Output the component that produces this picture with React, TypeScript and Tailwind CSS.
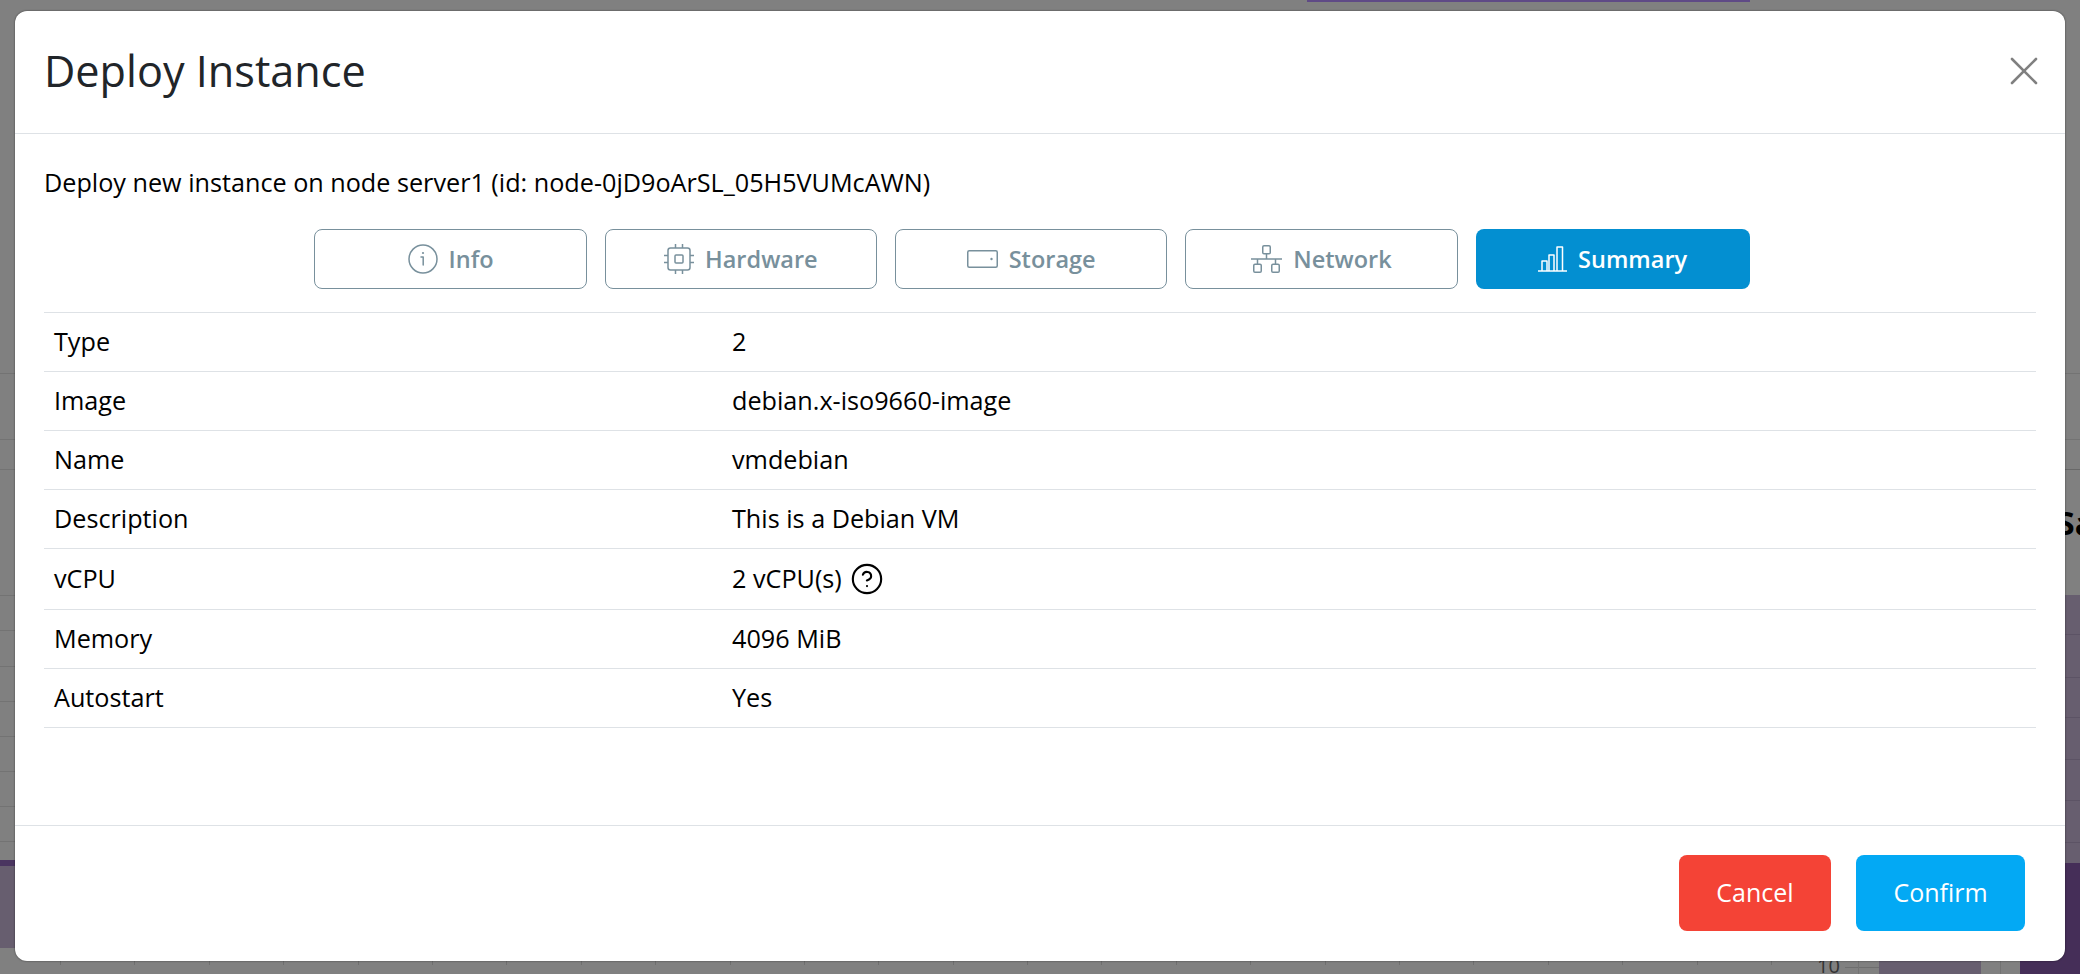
import { CircleHelp, X } from 'lucide-react';

const rows = [
  { label: 'Type', value: '2' },
  { label: 'Image', value: 'debian.x-iso9660-image' },
  { label: 'Name', value: 'vmdebian' },
  { label: 'Description', value: 'This is a Debian VM' },
  { label: 'vCPU', value: '2 vCPU(s)', help: true },
  { label: 'Memory', value: '4096 MiB' },
  { label: 'Autostart', value: 'Yes' },
];

function InfoIcon() {
  return (
    <svg width="30" height="30" viewBox="0 0 30 30" fill="none" stroke="currentColor" strokeWidth="1.5">
      <circle cx="15" cy="15" r="14" />
      <path d="M13 13h2.2v8" strokeLinecap="round" strokeLinejoin="round" />
      <circle cx="15" cy="9" r="1.1" fill="currentColor" stroke="none" />
    </svg>
  );
}

function ChipIcon() {
  return (
    <svg width="30" height="30" viewBox="0 0 30 30" fill="none" stroke="currentColor" strokeWidth="1.5">
      <rect x="4" y="4" width="22" height="22" rx="2.5" />
      <rect x="11" y="11" width="8" height="8" rx="1" />
      <path d="M11.5 0v4M18.5 0v4M11.5 26v4M18.5 26v4M0 11.5h4M0 18.5h4M26 11.5h4M26 18.5h4" />
    </svg>
  );
}

function StorageIcon() {
  return (
    <svg width="31" height="18" viewBox="0 0 31 18" fill="none" stroke="currentColor" strokeWidth="1.5">
      <rect x="0.75" y="0.75" width="29.5" height="16.5" rx="1.5" />
      <circle cx="24.5" cy="9" r="1.2" fill="currentColor" stroke="none" />
    </svg>
  );
}

function NetworkIcon() {
  return (
    <svg width="31" height="28" viewBox="0 0 31 28" fill="none" stroke="currentColor" strokeWidth="1.5">
      <rect x="11.75" y="0.75" width="7.5" height="8" rx="1.25" />
      <rect x="2.75" y="19.25" width="7.5" height="8" rx="1.25" />
      <rect x="20.75" y="19.25" width="7.5" height="8" rx="1.25" />
      <path d="M15.5 8.75v5.25M0 14h31M6.5 14v5.25M24.5 14v5.25" />
    </svg>
  );
}

function SummaryIcon() {
  return (
    <svg width="29" height="26" viewBox="0 0 29 26" fill="none" stroke="currentColor" strokeWidth="1.5">
      <path d="M0 25h29" />
      <path d="M4 25V15h5v10M11 25V9h5v16M19 25V1h5.5v24" strokeLinejoin="round" />
    </svg>
  );
}

const tabs = [
  { label: 'Info', icon: InfoIcon },
  { label: 'Hardware', icon: ChipIcon },
  { label: 'Storage', icon: StorageIcon },
  { label: 'Network', icon: NetworkIcon },
  { label: 'Summary', icon: SummaryIcon, active: true },
];

const leftBands = [
  'h-[374px]', 'h-[66px]', 'h-[30px] border-[#686868]', 'h-[126px]', 'h-[35px]', 'h-[36px]', 'h-[35px]',
  'h-[35px]', 'h-[35px]', 'h-[35px]', 'h-[35px]',
];
const purpleBands = ['h-[40px]', 'h-[43px]', 'h-[40px]', 'h-[42px]', 'h-[41px]', 'h-[42px]', 'h-[20px] border-transparent'];

// what is left visible of the dimmed page behind the modal
function Backdrop() {
  return (
    <div className="absolute inset-0 flex overflow-hidden">
      <div className="flex w-[15px] flex-col">
        {leftBands.map((band, i) => (
          <div key={i} className={`border-b border-[#737373] ${band}`} />
        ))}
        <div className="h-[18px]" />
        <div className="h-[6px] bg-[#4a3560]" />
        <div className="h-[82px] bg-[#675e6f]" />
      </div>

      <div className="flex flex-1 flex-col justify-between">
        <div className="ml-[1292px] h-[2px] w-[443px] bg-[#5f4a86]" />
        <div className="flex h-[13px] overflow-hidden pl-[45px]">
          {Array.from({ length: 23 }, (_, i) => (
            <div key={i} className="h-[4px] w-[74.4px] shrink-0 border-l border-[#6f6f6f]" />
          ))}
          <div className="h-[4px] w-[46px] shrink-0 border-l border-[#6f6f6f]" />
          <div className="-mt-[3px] w-[28px] shrink-0 text-[20px] leading-[16px] text-[#333]">10</div>
          <div className="mt-[6px] h-px w-[13px] bg-[#6e6e6e]" />
          <div className="h-full w-px bg-[#737373]" />
          <div className="mt-[6px] h-px w-[20px] bg-[#6e6e6e]" />
          <div className="h-full w-[102px] bg-[#675e6f]" />
          <div className="ml-[19px] h-full w-px bg-[#737373]" />
        </div>
      </div>

      <div className="flex w-[60px] flex-col">
        <div className="h-[374px] border-b border-[#737373]" />
        <div className="h-[66px] border-b border-[#737373]" />
        <div className="h-[30px] border-b border-[#686868]" />
        <div className="h-[125px] overflow-hidden whitespace-nowrap pl-[37px] pt-[33px] text-[32px] font-bold leading-[40px] text-black">
          Sa
        </div>
        <div className="flex h-[268px] flex-col bg-[#675e6f]">
          {purpleBands.map((band, i) => (
            <div key={i} className={`border-b border-[#5c5365] ${band}`} />
          ))}
        </div>
        <div className="flex-1 bg-[#452e58]" />
      </div>
    </div>
  );
}

export default function App() {
  return (
    <div className="relative h-[974px] overflow-hidden bg-[#808080] font-['Open_Sans',sans-serif] text-[#212529]">
      <Backdrop />
      <div className="absolute left-[15px] top-[11px] flex h-[950px] w-[2050px] flex-col rounded-[12px] bg-white shadow-[0_0_2px_rgba(0,0,0,0.6)]">
        <div className="flex h-[123px] items-center justify-between border-b border-[#dee2e6] pb-[2px] pl-[29px] pr-[17px]">
          <h1 className="text-[43.2px] leading-none">Deploy Instance</h1>
          <X className="h-[48px] w-[48px] text-[#808080]" strokeWidth={1.3} />
        </div>

        <div className="flex-1 px-[29px]">
          <p className="mt-[30px] text-[25.2px] leading-[36px] text-black">
            Deploy new instance on node server1 (id: node-0jD9oArSL_05H5VUMcAWN)
          </p>
          <div className="mt-[29px] flex justify-center gap-[18px] pr-[16px]">
            {tabs.map(({ label, icon: Icon, active }) => (
              <button
                key={label}
                className={
                  active
                    ? 'flex h-[60px] w-[274px] items-center justify-center gap-[11px] rounded-[8px] bg-[#038fd1] text-[23.5px] font-semibold text-white'
                    : 'flex h-[60px] w-[272.3px] items-center justify-center gap-[11px] rounded-[8px] border border-[#78909c] text-[23.5px] font-semibold text-[#78909c]'
                }
              >
                <Icon />
                <span className="mt-[2px]">{label}</span>
              </button>
            ))}
          </div>
          <div className="mt-[23px] border-t border-[#dee2e6]">
            {rows.map((row) => (
              <div
                key={row.label}
                className={
                  row.help
                    ? 'flex items-center border-b border-[#dee2e6] px-[10px] pb-[13px] pt-[11px] text-[25.2px] leading-[36px] text-black'
                    : 'flex items-center border-b border-[#dee2e6] px-[10px] pb-[12px] pt-[10px] text-[25.2px] leading-[36px] text-black'
                }
              >
                <div className="w-[678px]">{row.label}</div>
                <div className="flex items-center gap-[8px]">
                  {row.value}
                  {row.help && <CircleHelp className="mt-[2px] h-[34px] w-[34px]" strokeWidth={1.5} />}
                </div>
              </div>
            ))}
          </div>
        </div>

        <div className="flex h-[136px] items-start justify-end gap-[25px] border-t border-[#dee2e6] pr-[40px] pt-[29px]">
          <button className="h-[76px] w-[152px] rounded-[8px] bg-[#f44336] text-[25px] text-white">Cancel</button>
          <button className="h-[76px] w-[169px] rounded-[8px] bg-[#03a9f4] text-[25px] text-white">Confirm</button>
        </div>
      </div>
    </div>
  );
}
